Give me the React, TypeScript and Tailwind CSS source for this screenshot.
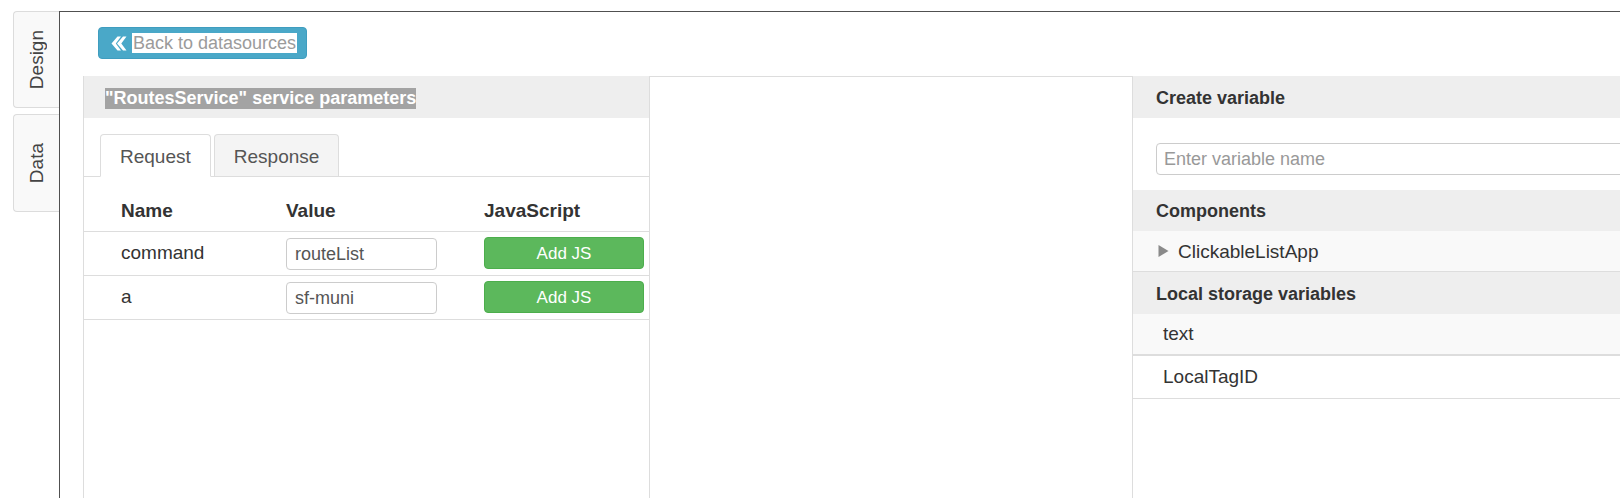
import React from "react";

function SideTab({ label, h }: { label: string; h: string }) {
  return (
    <div
      className={`${h} w-[46px] flex items-center justify-center bg-[#f9f9f9] border border-r-0 border-[#dcdcdc] rounded-l-[4px]`}
    >
      <span className="[writing-mode:vertical-rl] rotate-180 text-[19px] text-[#444] leading-none">
        {label}
      </span>
    </div>
  );
}

function BackIcon() {
  return (
    <svg viewBox="0 0 16 16" className="w-[16px] h-[17px]" fill="#fff">
      <polygon points="6.5,1 0.5,8 6.5,15 10,15 4.8,8 10,1" />
      <polygon points="12,1 6,8 12,15 15.5,15 10.3,8 15.5,1" />
    </svg>
  );
}

const params = [
  { name: "command", value: "routeList" },
  { name: "a", value: "sf-muni" },
];

function ParamsPanel() {
  return (
    <div className="w-[567px] h-[422px] shrink-0 border-l border-r border-[#ddd]">
      {/* panel heading */}
      <div className="h-[42px] bg-[#eee] flex items-center pl-[21px] pt-[3px]">
        <span className="bg-[#a3a3a3] text-white font-bold text-[18px] leading-[21px]">
          "RoutesService" service parameters
        </span>
      </div>

      {/* tabs */}
      <div className="mt-[16px] pl-[16px] flex gap-[3px] border-b border-[#ddd]">
        <div className="h-[43px] px-[19px] pt-[3px] flex items-center bg-white border border-[#ddd] border-b-white rounded-t-[4px] -mb-px text-[19px] text-[#555]">
          Request
        </div>
        <div className="h-[42px] px-[19px] pt-[3px] flex items-center bg-[#f4f4f4] border border-b-0 border-[#ddd] rounded-t-[4px] text-[19px] text-[#555]">
          Response
        </div>
      </div>

      {/* table */}
      <div className="grid grid-cols-[165px_198px_160px] pl-[37px] h-[55px] items-end pb-[9px] border-b border-[#ddd] font-bold text-[19px] leading-[22px] text-[#333]">
        <div>Name</div>
        <div>Value</div>
        <div>JavaScript</div>
      </div>
      {params.map((p) => (
        <div
          key={p.name}
          className="grid grid-cols-[165px_198px_160px] pl-[37px] h-[44px] items-center border-b border-[#ddd] text-[19px] text-[#333]"
        >
          <div>{p.name}</div>
          <div>
            <div className="w-[151px] h-[32px] border border-[#ccc] rounded-[4px] px-[8px] pt-[2px] flex items-center text-[18px] text-[#555]">
              {p.value}
            </div>
          </div>
          <div>
            <button className="w-[160px] h-[32px] -mt-[1px] pt-[1px] rounded-[4px] bg-[#5cb85c] border border-[#4cae4c] text-white text-[17px]">
              Add JS
            </button>
          </div>
        </div>
      ))}
    </div>
  );
}

function SectionHead({ children, h }: { children: React.ReactNode; h: string }) {
  return (
    <div className={`${h} bg-[#eee] flex items-center pl-[23px] pt-[2px] font-bold text-[18px] text-[#333]`}>
      {children}
    </div>
  );
}

function VariablesPanel() {
  return (
    <div className="w-[600px] shrink-0">
      <SectionHead h="h-[42px]">Create variable</SectionHead>
      <div className="h-[72px] pt-[25px] pl-[23px]">
        <div className="w-[560px] h-[32px] border border-[#ccc] rounded-[4px] px-[7px] flex items-center text-[18px] text-[#999]">
          Enter variable name
        </div>
      </div>
      <SectionHead h="h-[41px]">Components</SectionHead>
      <div className="h-[41px] bg-[#f9f9f9] border-b border-[#ddd] flex items-center pl-[25px] gap-[9px] pt-[2px] text-[19px] text-[#333]">
        <svg viewBox="0 0 10 12" className="w-[11px] h-[12px] -mt-[3px]" fill="#8a8a8a">
          <polygon points="0,0 10,6 0,12" />
        </svg>
        <span>ClickableListApp</span>
      </div>
      <SectionHead h="h-[42px]">Local storage variables</SectionHead>
      <div className="h-[42px] bg-[#f9f9f9] border-b-2 border-[#ddd] flex items-center pl-[30px] text-[19px] text-[#333]">
        text
      </div>
      <div className="h-[43px] border-b border-[#ddd] flex items-center pl-[30px] text-[19px] text-[#333]">
        LocalTagID
      </div>
    </div>
  );
}

export default function App() {
  return (
    <div className="w-[1620px] h-[498px] overflow-hidden bg-white flex font-['Liberation_Sans',Arial,sans-serif] text-[#333]">
      {/* vertical side tabs */}
      <div className="w-[59px] shrink-0 pt-[11px] pl-[13px] flex flex-col gap-[6px]">
        <SideTab label="Design" h="h-[97px]" />
        <SideTab label="Data" h="h-[98px]" />
      </div>

      {/* main frame */}
      <div className="flex-1 min-w-0 mt-[11px] border-l border-t border-[#505050] overflow-hidden">
        <div className="h-[64px] pt-[15px] pl-[38px]">
          <button className="h-[32px] w-[209px] flex items-center gap-[5px] pl-[12px] rounded-[4px] bg-[#4aa8c8] border border-[#3f9dbf]">
            <BackIcon />
            <span className="bg-white text-[#9b9b9b] text-[18px] leading-[20px] px-[1px]">
              Back to datasources
            </span>
          </button>
        </div>

        <div className="flex pl-[23px]">
          <ParamsPanel />
          <div className="w-[483px] h-[422px] shrink-0 border-t border-r border-[#ddd]" />
          <VariablesPanel />
        </div>
      </div>
    </div>
  );
}
